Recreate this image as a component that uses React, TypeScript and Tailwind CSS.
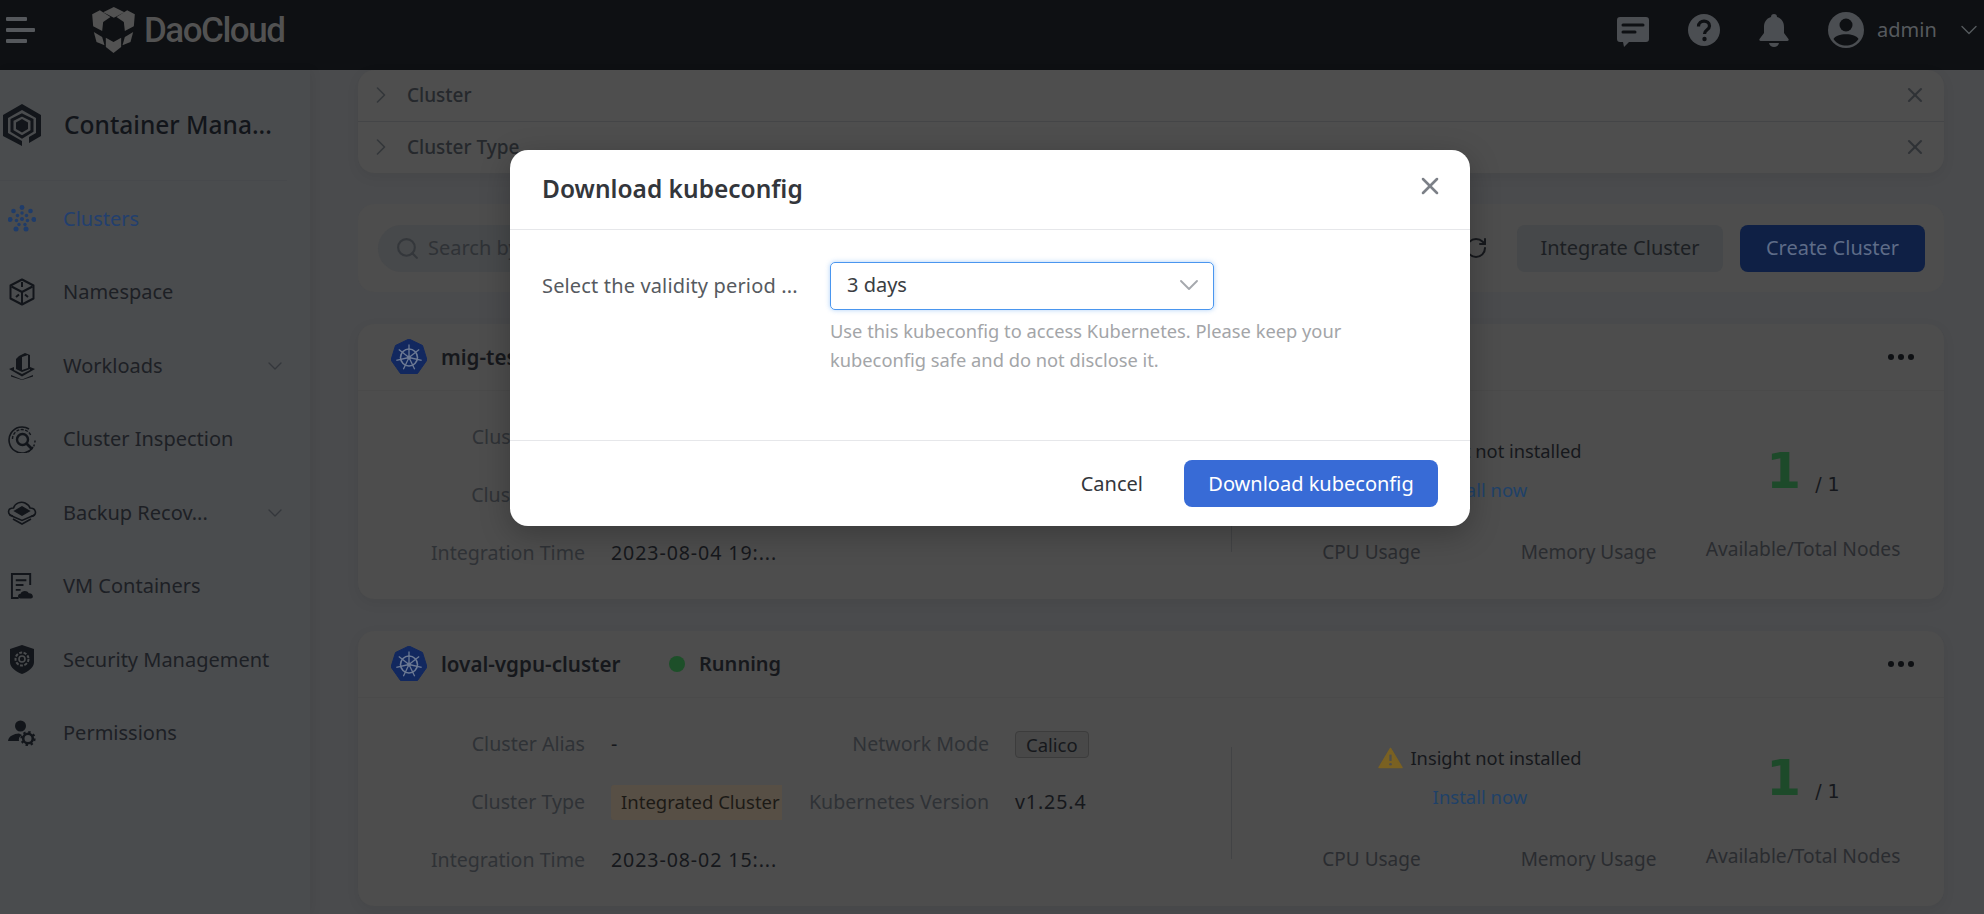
import React from 'react';
import { ChevronRight, ChevronDown, X, Search, RotateCw } from 'lucide-react';

const font = "font-['Noto_Sans','Liberation_Sans',sans-serif]";

function DaoLogo() {
  return (
    <svg viewBox="275 20 128 138" className="h-[46px] w-[43px] shrink-0" fill="#525252">
      <polygon points="340,20 372,36 340,52 308,36" />
      <polygon points="275,42 298,30 330,50 308,65 305,92 278,78" />
      <polygon points="403,42 380,30 348,50 370,65 373,92 400,78" />
      <polygon points="280,95 305,110 312,135 288,125" />
      <polygon points="398,95 373,110 366,135 390,125" />
      <polygon points="316,112 339,125 362,112 362,140 339,158 316,140" />
    </svg>
  );
}

function KubeIcon() {
  const spokes = [0, 51.4, 102.8, 154.2, 205.6, 257, 308.4];
  return (
    <svg viewBox="0 0 36 37" className="h-[37px] w-[36px] shrink-0">
      <polygon points="18,0 31.5,6.5 36,21 26.5,34.5 9.5,34.5 0,21 4.5,6.5" fill="#12285f" stroke="#12285f" strokeLinejoin="round" strokeWidth="1" />
      <circle cx="18" cy="18.5" r="8.5" fill="none" stroke="#6d7a94" strokeWidth="1.6" />
      <circle cx="18" cy="18.5" r="2" fill="#6d7a94" />
      {spokes.map((a) => (
        <line key={a} x1="18" y1="18.5" x2="18" y2="5.5" stroke="#6d7a94" strokeWidth="1.3" transform={`rotate(${a} 18 18.5)`} />
      ))}
    </svg>
  );
}

function ClustersIcon() {
  const dots: [number, number, number][] = [
    [14, 2.5, 2.4], [5.5, 6, 2.3], [22.5, 6, 2.3], [2.2, 14.5, 2.4], [25.8, 14.5, 2.4], [8, 24, 2.5], [18, 24, 2.5],
    [14, 8, 1.7], [9.5, 10.5, 1.7], [18.5, 10.5, 1.7], [8.5, 15.5, 1.7], [19.5, 15.5, 1.7], [11, 19.5, 1.7], [17, 19.5, 1.7], [14, 14, 2],
  ];
  return (
    <svg viewBox="0 0 28 27" className="h-[27px] w-[28px]" fill="#1f3c6a">
      {dots.map(([x, y, r]) => (
        <circle key={`${x}-${y}`} cx={x} cy={y} r={r} />
      ))}
    </svg>
  );
}

function SideIcon({ name }: { name: string }) {
  const ink = '#12151a';
  if (name === 'Clusters') return <ClustersIcon />;
  if (name === 'Namespace')
    return (
      <svg viewBox="0 0 26 28" className="h-[28px] w-[26px]" fill="none" stroke={ink} strokeWidth="2">
        <polygon points="13,1.5 24.5,7.5 24.5,20.5 13,26.5 1.5,20.5 1.5,7.5" strokeLinejoin="round" />
        <path d="M13 14 L13 26 M13 14 L2.5 8.5 M13 14 L23.5 8.5 M13 4 L13 9 M7 19 L10 16.5 M19 19 L16 16.5" />
      </svg>
    );
  if (name === 'Workloads')
    return (
      <svg viewBox="0 0 28 28" className="h-[28px] w-[28px]" fill={ink}>
        <path d="M11 4 L17 1 L22 3 L22 17 L14 20 L8 17 L8 7 Z" />
        <path d="M14 5 L20 3 L20 16 L14 18 Z" fill="#4a4c4e" />
        <path d="M1 17 L6 15 L6 18 L14 22 L22 18 L22 15 L27 17 L14 24.5 Z" />
        <path d="M3 23 L14 27.5 L25 23 L25 24.5 L14 28 L3 24.5 Z" />
      </svg>
    );
  if (name === 'Cluster Inspection')
    return (
      <svg viewBox="0 0 28 28" className="h-[28px] w-[28px]" fill="none" stroke={ink}>
        <path d="M21 4 A13 13 0 1 0 25 22" strokeWidth="1.6" />
        <path d="M20 27 A13 13 0 0 0 27 15" strokeWidth="1.4" strokeDasharray="2 2" />
        <path d="M4.5 14 A9.5 9.5 0 0 1 23 11" strokeWidth="1.4" strokeDasharray="3 1.5" />
        <circle cx="14.5" cy="14.5" r="5.5" strokeWidth="2.4" />
        <path d="M18.5 18.5 L24 24" strokeWidth="2.8" />
      </svg>
    );
  if (name === 'Backup Recov...')
    return (
      <svg viewBox="0 0 30 24" className="h-[24px] w-[30px]" fill="none" stroke={ink} strokeWidth="1.6">
        <path d="M6 15 C0 14 0 7 6.5 7 C8 2 14 0 18 2 C21 3.5 22.5 5 23 7 C29 7 31 14 24 15.5" />
        <path d="M15 6 L22 10 L15 14 L8 10 Z" fill={ink} />
        <path d="M2.5 14 L15 19.5 L27.5 14" />
        <path d="M6 18 L15 23 L24 18" />
      </svg>
    );
  if (name === 'VM Containers')
    return (
      <svg viewBox="0 0 26 28" className="h-[28px] w-[25px]" fill="none" stroke={ink} strokeWidth="2">
        <path d="M9 26.5 H2 V1.5 H21 V13" />
        <path d="M6 8 H17 M6 13 H14 M6 18 H11" />
        <path d="M11 27 C7.5 27 7.5 22 11 22 C12 18.5 18 18 19.5 21.5 C24 21 25.5 27 21.5 27 Z" fill={ink} stroke="none" />
      </svg>
    );
  if (name === 'Security Management')
    return (
      <svg viewBox="0 0 24 29" className="h-[29px] w-[24px]">
        <path d="M12 0 L24 4 V17 C24 23 17 27 12 29 C7 27 0 23 0 17 V4 Z" fill={ink} />
        <circle cx="12" cy="14" r="6.5" fill="none" stroke="#4a4c4e" strokeWidth="2" strokeDasharray="3 1.5" />
        <circle cx="12" cy="14" r="3" fill="none" stroke="#4a4c4e" strokeWidth="1.6" />
      </svg>
    );
  return (
    <svg viewBox="0 0 28 26" className="h-[26px] w-[28px]">
      <circle cx="12.5" cy="6" r="5.5" fill={ink} />
      <path d="M0 21 C1 15.5 6 14 11 13.5 L14 15 C11 16.5 10.5 19 11 21 Z" fill={ink} />
      <circle cx="20" cy="18.5" r="4.8" fill="none" stroke={ink} strokeWidth="2.6" />
      <circle cx="20" cy="18.5" r="6.6" fill="none" stroke={ink} strokeWidth="2" strokeDasharray="2.4 2.8" />
    </svg>
  );
}

const navItems = [
  { name: 'Clusters', active: true },
  { name: 'Namespace' },
  { name: 'Workloads', arrow: true },
  { name: 'Cluster Inspection' },
  { name: 'Backup Recov...', arrow: true },
  { name: 'VM Containers' },
  { name: 'Security Management' },
  { name: 'Permissions' },
];

function TopBar() {
  return (
    <header className="flex h-[70px] shrink-0 items-center bg-[#0e1013] pb-[10px] text-[#565a5e]">
      <div className="ml-[6px] flex w-[29px] flex-col gap-[7px]">
        <span className="h-[4px] w-[21px] rounded-[1px] bg-[#55585c]" />
        <span className="h-[4px] w-[29px] rounded-[1px] bg-[#55585c]" />
        <span className="h-[4px] w-[21px] rounded-[1px] bg-[#55585c]" />
      </div>
      <div className="ml-[57px] flex items-center gap-[9px]">
        <DaoLogo />
        <span className="font-['Roboto',sans-serif] text-[35px] leading-none font-medium tracking-[-1.5px] text-[#525252]">DaoCloud</span>
      </div>
      <div className="ml-auto flex items-center">
        <svg viewBox="0 0 32 30" className="mt-[3px] h-[30px] w-[32px]" fill="#4b4e52">
          <path d="M3 0 H29 A3 3 0 0 1 32 3 V22 A3 3 0 0 1 29 25 H12 L7 30 L6 25 H3 A3 3 0 0 1 0 22 V3 A3 3 0 0 1 3 0 Z" />
          <path d="M6 8 H26 M6 15 H18" stroke="#0e1013" strokeWidth="3" strokeLinecap="round" />
        </svg>
        <svg viewBox="0 0 32 32" className="ml-[39px] h-[32px] w-[32px]">
          <circle cx="16" cy="16" r="16" fill="#4b4e52" />
          <path d="M10.5 12.5 C10.5 5.5 21.5 5.5 21.5 12 C21.5 16 16.5 15.5 16.5 20" fill="none" stroke="#0e1013" strokeWidth="3.2" />
          <circle cx="16.5" cy="25" r="2.2" fill="#0e1013" />
        </svg>
        <svg viewBox="0 0 30 33" className="ml-[39px] h-[33px] w-[30px]" fill="#4b4e52">
          <path d="M15 0 C17 0 18 1.2 18 3 C23 4.5 25 8.5 25 13 V19 L29.5 25 C30 26 29.5 27 28.5 27 H1.5 C0.5 27 0 26 0.5 25 L5 19 V13 C5 8.5 7 4.5 12 3 C12 1.2 13 0 15 0 Z" />
          <path d="M10 29 H20 C19.5 31.5 17.5 33 15 33 C12.5 33 10.5 31.5 10 29 Z" />
        </svg>
        <svg viewBox="0 0 36 36" className="ml-[39px] h-[36px] w-[36px]">
          <circle cx="18" cy="18" r="18" fill="#4b4e52" />
          <circle cx="18" cy="13" r="6.5" fill="#0e1013" />
          <path d="M5.5 27 C8 20.5 28 20.5 30.5 27 C27 32 22.5 33.5 18 33.5 C13.5 33.5 9 32 5.5 27 Z" fill="#0e1013" />
        </svg>
        <span className="ml-[13px] w-[58px] text-[20px] text-[#565a5e]">admin</span>
        <ChevronDown className="mr-[1px] ml-[20px] h-[28px] w-[28px] text-[#565a5e]" strokeWidth={1.2} />
      </div>
    </header>
  );
}

function Sidebar() {
  return (
    <aside className="flex w-[310px] shrink-0 flex-col bg-[#4a4c4e] shadow-[3px_0_10px_rgba(0,0,0,0.05)]">
      <div className="mr-[23px] flex h-[111px] items-center border-b border-[#47494c]">
        <svg viewBox="0 0 38 42" className="ml-[3px] h-[42px] w-[38px] shrink-0">
          <path d="M19 0 L38 11 V32 L26 39 V33 L33 29 V14 L19 6 L5 14 V29 L19 37 L19 42 L0 32 V11 Z" fill="#12151a" />
          <polygon points="19,11 29,16 29,27 19,33 9,27 9,16" fill="none" stroke="#12151a" strokeWidth="3" />
          <polygon points="19,15 25,18.5 25,25 19,28.5 13,25 13,18.5" fill="#12151a" />
        </svg>
        <span className="ml-[23px] text-[24.5px] font-medium whitespace-nowrap text-[#12151a]">Container Mana...</span>
      </div>
      <nav className="flex flex-col pt-[1px]">
        {navItems.map((item) => (
          <div key={item.name} className="flex h-[73.5px] items-center pr-[23px]">
            <div className="flex w-[44px] justify-center">
              <SideIcon name={item.name} />
            </div>
            <span className={`ml-[19px] text-[20px] whitespace-nowrap ${item.active ? 'text-[#223f6e]' : 'text-[#1d2025]'}`}>{item.name}</span>
            {item.arrow && <ChevronDown className="ml-auto h-[24px] w-[24px] text-[#34373b]" strokeWidth={1.3} />}
          </div>
        ))}
      </nav>
    </aside>
  );
}

function FilterPanel() {
  return (
    <section className="rounded-[16px] bg-[#4e4e4e] shadow-[0_4px_14px_rgba(0,0,0,0.06)]">
      {['Cluster', 'Cluster Type'].map((label, i) => (
        <div key={label} className={`flex h-[51.5px] items-center pr-[17px] pl-[9px] ${i === 0 ? 'border-b border-[#444547]' : ''}`}>
          <ChevronRight className="h-[28px] w-[28px] text-[#33363a]" strokeWidth={1.3} />
          <span className="ml-[12px] text-[19px] font-medium text-[#25282c]">{label}</span>
          <X className="ml-auto h-[24px] w-[24px] text-[#2f3236]" strokeWidth={2} />
        </div>
      ))}
    </section>
  );
}

function Toolbar() {
  return (
    <section className="mt-[31px] flex h-[88px] items-center gap-[17px] rounded-[16px] bg-[#4d4d4d] pr-[19px] pl-[20px]">
      <div className="flex h-[47px] w-[500px] items-center rounded-full bg-[#47494b] pl-[17px]">
        <Search className="h-[25px] w-[25px] text-[#34373b]" strokeWidth={2} />
        <span className="ml-[8px] text-[20px] text-[#2f3236]">Search by name</span>
      </div>
      <RotateCw className="ml-auto h-[24px] w-[24px] text-[#16181c]" strokeWidth={2} />
      <button className="ml-[12px] h-[47px] w-[206px] rounded-[8px] bg-[#46484a] text-[20px] text-[#1c1f23]">Integrate Cluster</button>
      <button className="h-[47px] w-[185px] rounded-[8px] bg-[#0f2045] text-[20px] text-[#5e6c88]">Create Cluster</button>
    </section>
  );
}

type Row = { name: string; status: string; time: string; version: string; mode: string };

function ClusterCard({ name, status, time, version, mode }: Row) {
  const label = 'text-right text-[19.6px] whitespace-nowrap text-[#2f3236]';
  const value = 'text-[19.6px] tracking-[0.9px] whitespace-nowrap text-[#16181c]';
  return (
    <section className="mt-[32px] h-[275px] shrink-0 rounded-[16px] bg-[#4d4d4d] shadow-[0_4px_14px_rgba(0,0,0,0.06)]">
      <div className="flex h-[67px] items-center border-b border-[#4a4a4a] pr-[30px] pl-[33px]">
        <KubeIcon />
        <span className="ml-[14px] w-[178px] text-[20.6px] font-semibold whitespace-nowrap text-[#16181c]">{name}</span>
        <span className="ml-[50px] h-[16px] w-[16px] rounded-full bg-[#1d4f29]" />
        <span className="ml-[14px] text-[20px] font-semibold text-[#16181c]">{status}</span>
        <span className="ml-auto flex gap-[4px]">
          <i className="h-[6px] w-[6px] rounded-full bg-[#0e1013]" />
          <i className="h-[6px] w-[6px] rounded-full bg-[#0e1013]" />
          <i className="h-[6px] w-[6px] rounded-full bg-[#0e1013]" />
        </span>
      </div>
      <div className="flex">
        <div className="grid w-[873px] shrink-0 grid-cols-[227px_171px_181px_1fr] auto-rows-[58px] items-center gap-x-[26px] pt-[17px]">
          <span className={label}>Cluster Alias</span>
          <span className={value}>-</span>
          <span className={label}>Network Mode</span>
          <span className="w-fit rounded-[4px] border border-[#3c3c3c] bg-[#484848] px-[10px] text-[18.5px] leading-[25px] text-[#16181c]">{mode}</span>
          <span className={label}>Cluster Type</span>
          <span className="flex h-[35px] items-center overflow-hidden rounded-l-[3px] bg-[#574f45] pl-[10px] text-[18.5px] whitespace-nowrap text-[#1c1a16]">Integrated Cluster</span>
          <span className={label}>Kubernetes Version</span>
          <span className={value}>{version}</span>
          <span className={label}>Integration Time</span>
          <span className={value}>{time}</span>
        </div>
        <div className="mt-[49px] flex h-[112px] border-l border-[#424345] pl-[31px]">
          <div className="flex w-[434px] flex-col items-center">
            <div className="flex h-[22px] items-center gap-[7px]">
              <svg viewBox="0 0 26 22" className="h-[22px] w-[25px]">
                <path d="M13 1 L25 21 H1 Z" fill="#7a6122" stroke="#7a6122" strokeWidth="1.5" strokeLinejoin="round" />
                <path d="M13 7.5 V14" stroke="#4d4d4d" strokeWidth="2.4" />
                <circle cx="13" cy="17.5" r="1.4" fill="#4d4d4d" />
              </svg>
              <span className="text-[18.3px] whitespace-nowrap text-[#16181c]">Insight not installed</span>
            </div>
            <span className="mt-[16px] text-[18.5px] leading-[24px] text-[#1f4168]">Install now</span>
            <div className="mt-[36px] grid w-full grid-cols-2 text-center text-[19px] text-[#2a2c30]">
              <span>CPU Usage</span>
              <span>Memory Usage</span>
            </div>
          </div>
          <div className="flex w-[212px] flex-col items-center">
            <div className="mt-[5px] flex h-[52px] items-end gap-[14px]">
              <span className="font-['DejaVu_Sans',sans-serif] text-[50px] leading-[52px] font-bold text-[#1d4a2a]">1</span>
              <span className="pb-[1px] font-['DejaVu_Sans',sans-serif] text-[19px] leading-[24px] text-[#16181c]">/ 1</span>
            </div>
            <span className="mt-[38px] text-[19.2px] whitespace-nowrap text-[#2a2c30]">Available/Total Nodes</span>
          </div>
        </div>
      </div>
    </section>
  );
}

function KubeconfigModal() {
  return (
    <div className="absolute top-[150px] left-[510px] w-[960px] rounded-[18px] bg-white shadow-[0_8px_30px_rgba(0,0,0,0.25)]">
      <div className="flex h-[80px] items-center justify-between border-b border-[#e6e7ea] pr-[26px] pl-[32px]">
        <h2 className="text-[24.5px] font-semibold text-[#33363b]">Download kubeconfig</h2>
        <X className="mb-[8px] h-[28px] w-[28px] text-[#7c8087]" strokeWidth={2.2} />
      </div>
      <div className="flex h-[211px] border-b border-[#e6e7ea] pt-[32px] pl-[32px]">
        <span className="w-[288px] pt-[9px] text-[20px] tracking-[0.15px] whitespace-nowrap text-[#565a60]">Select the validity period ...</span>
        <div className="w-[384px]">
          <div className="flex h-[48px] items-center justify-between rounded-[5px] border border-[#4a96ef] pr-[8px] pb-[2px] pl-[16px] shadow-[0_0_5px_rgba(74,150,239,0.45)]">
            <span className="text-[20px] text-[#3a3d42]">3 days</span>
            <ChevronDown className="h-[32px] w-[32px] text-[#a5a8ad]" strokeWidth={1.4} />
          </div>
          <p className="mt-[6px] w-[560px] text-[18.3px] leading-[29px] text-[#a3a5a8]">
            Use this kubeconfig to access Kubernetes. Please keep your kubeconfig safe and do not disclose it.
          </p>
        </div>
      </div>
      <div className="flex h-[85px] items-center justify-end gap-[41px] pr-[32px]">
        <span className="text-[20px] text-[#33363b]">Cancel</span>
        <button className="h-[47px] w-[254px] rounded-[8px] bg-[#386bd6] text-[20px] text-white">Download kubeconfig</button>
      </div>
    </div>
  );
}

export default function App() {
  return (
    <div className={`relative flex h-[914px] w-[1984px] flex-col overflow-hidden bg-[#4a4b4d] ${font}`}>
      <TopBar />
      <div className="flex min-h-0 flex-1">
        <Sidebar />
        <main className="min-w-0 flex-1 pr-[40px] pl-[48px]">
          <FilterPanel />
          <Toolbar />
          <ClusterCard name="mig-test-cluster" status="Running" time="2023-08-04 19:..." version="v1.25.4" mode="Calico" />
          <ClusterCard name="loval-vgpu-cluster" status="Running" time="2023-08-02 15:..." version="v1.25.4" mode="Calico" />
        </main>
      </div>
      <KubeconfigModal />
    </div>
  );
}
